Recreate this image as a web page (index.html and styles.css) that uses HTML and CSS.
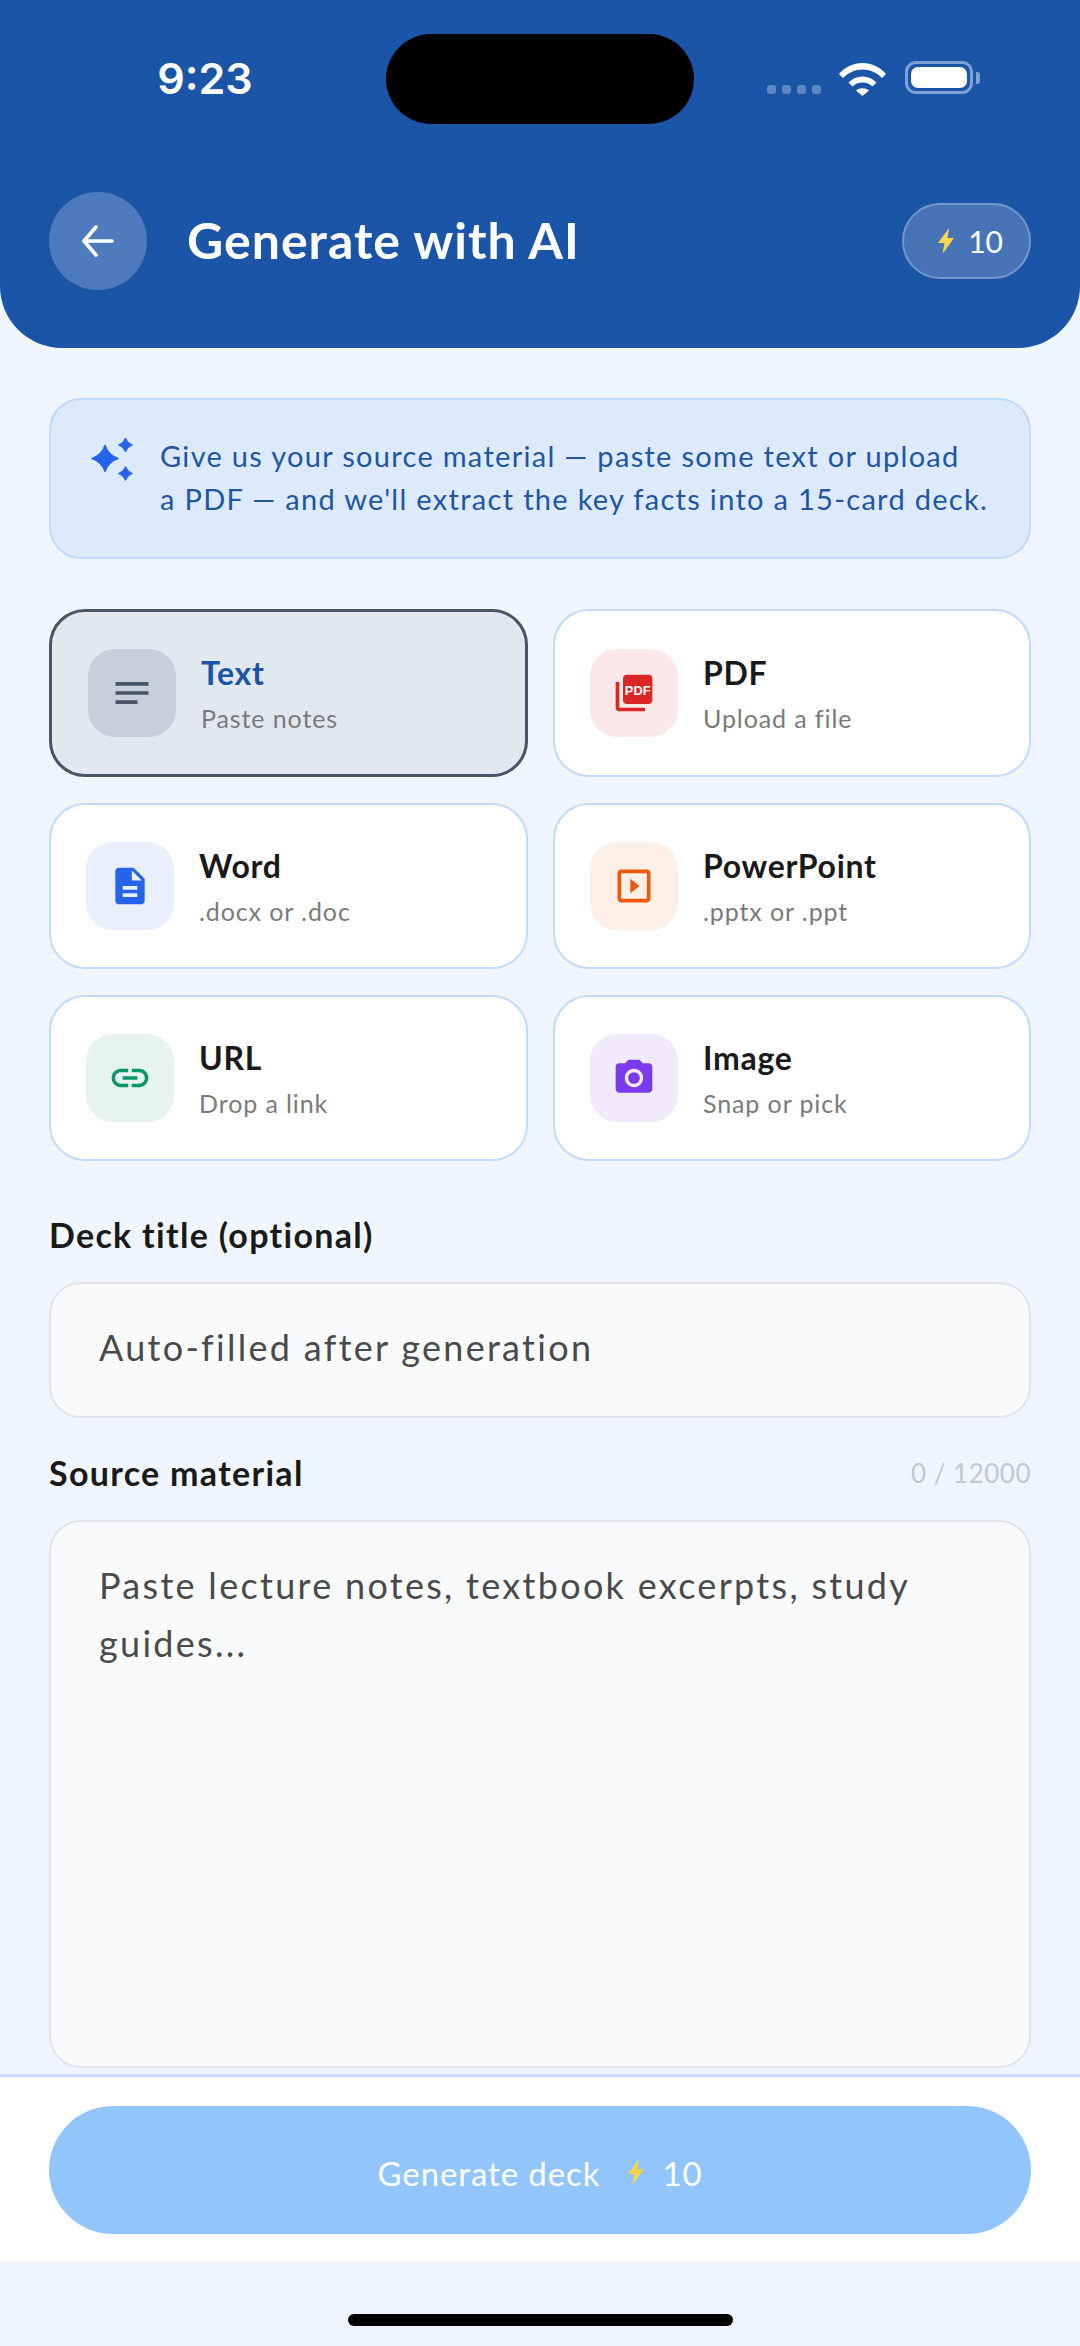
FILE: index.html
```html
<!DOCTYPE html>
<html lang="en">
  <head>
    <meta charset="UTF-8" />
    <meta name="viewport" content="width=device-width, initial-scale=1.0" />
    <title>Generate with AI</title>
    <link rel="stylesheet" href="styles.css">
  </head>
  <body>
    <div class="app">
      <header class="header">
        <div class="status-bar">
          <span class="status-time">9:23</span>
          <span class="island"></span>
          <div class="status-icons">
            <span class="signal"><i></i><i></i><i></i><i></i></span>
            <svg class="wifi" viewBox="0 0 47 36"><path d="M0 14C6 7 14 3 23.500 3S41 7 47 14l-4 4C37.500 12.500 31 9.500 23.500 9.500S9.500 12.500 4 18z" fill="#fff"/><path d="M9.500 22.500c3.800-3.800 8.500-6 14-6s10.200 2.200 14 6l-4 4c-2.800-2.700-6-4-10-4s-7.200 1.300-10 4z" fill="#fff"/><path d="M17 30.500c1.700-1.400 4-2.300 6.500-2.300s4.800.9 6.500 2.300L23.500 36z" fill="#fff"/></svg>
            <span class="battery"><span class="battery-fill"></span></span>
            <span class="battery-nub"></span>
          </div>
        </div>
        <div class="nav">
          <button class="back-btn" type="button">
            <svg width="36" height="36" viewBox="0 0 36 36" fill="none" stroke="#fff" stroke-width="3.600" stroke-linecap="round" stroke-linejoin="round"><path d="M32 18H4M16 4 4 18l12 14"/></svg>
          </button>
          <h1 class="title">Generate with AI</h1>
          <div class="credit-pill">
            <svg class="bolt" viewBox="0 0 16 26"><path d="M11 0 0 15h6.500L4.500 26 16 10H9.500z"/></svg>
            <span>10</span>
          </div>
        </div>
      </header>

      <main class="content">
        <div class="notice">
          <svg class="sparkle" viewBox="0 0 44 44"><path d="M14 7Q17.500 17 27.500 20.500 17.500 24 14 34 10.500 24 .5 20.500 10.500 17 14 7z"/><path d="M34.500 0Q36.300 5.200 41.500 7 36.300 8.800 34.500 14 32.700 8.800 27.500 7 32.700 5.200 34.500 0z"/><path d="M34.500 28.500Q36.300 33.700 41.500 35.500 36.300 37.300 34.500 42.500 32.700 37.300 27.500 35.500 32.700 33.700 34.500 28.500z"/></svg>
          <p>Give us your source material — paste some text or upload<br>a PDF — and we'll extract the key facts into a 15-card deck.</p>
        </div>

        <div class="sources">
          <div class="source source-active">
            <span class="source-icon icon-text">
              <svg viewBox="0 0 24 24"><path d="M3 18h12v-2H3v2zM3 6v2h18V6H3zm0 7h18v-2H3v2z"/></svg>
            </span>
            <div><div class="source-name">Text</div><div class="source-sub">Paste notes</div></div>
          </div>
          <div class="source">
            <span class="source-icon icon-pdf">
              <svg viewBox="0 0 24 24"><path d="M20 2H8c-1.100 0-2 .9-2 2v12c0 1.100.9 2 2 2h12c1.100 0 2-.9 2-2V4c0-1.100-.9-2-2-2z"/><path d="M4 6H2v14c0 1.100.9 2 2 2h14v-2H4V6z"/><text x="14" y="13" class="pdf-label">PDF</text></svg>
            </span>
            <div><div class="source-name">PDF</div><div class="source-sub">Upload a file</div></div>
          </div>
          <div class="source">
            <span class="source-icon icon-word">
              <svg viewBox="0 0 24 24"><path d="M14 2H6c-1.100 0-2 .9-2 2v16c0 1.100.9 2 2 2h12c1.100 0 2-.9 2-2V8l-6-6zm2 16H8v-2h8v2zm0-4H8v-2h8v2zm-3-5V3.500L18.500 9H13z"/></svg>
            </span>
            <div><div class="source-name">Word</div><div class="source-sub">.docx or .doc</div></div>
          </div>
          <div class="source">
            <span class="source-icon icon-ppt">
              <svg viewBox="0 0 24 24"><path d="M10 8v8l5-4-5-4zm9-5H5c-1.100 0-2 .9-2 2v14c0 1.100.9 2 2 2h14c1.100 0 2-.9 2-2V5c0-1.100-.9-2-2-2zm0 16H5V5h14v14z"/></svg>
            </span>
            <div><div class="source-name">PowerPoint</div><div class="source-sub">.pptx or .ppt</div></div>
          </div>
          <div class="source">
            <span class="source-icon icon-url">
              <svg viewBox="0 0 24 24"><path d="M3.900 12c0-1.710 1.390-3.100 3.100-3.100h4V7H7c-2.760 0-5 2.240-5 5s2.240 5 5 5h4v-1.900H7c-1.710 0-3.100-1.390-3.100-3.100zM8 13h8v-2H8v2zm9-6h-4v1.900h4c1.710 0 3.100 1.390 3.100 3.100s-1.390 3.100-3.100 3.100h-4V17h4c2.760 0 5-2.240 5-5s-2.240-5-5-5z"/></svg>
            </span>
            <div><div class="source-name">URL</div><div class="source-sub">Drop a link</div></div>
          </div>
          <div class="source">
            <span class="source-icon icon-image">
              <svg viewBox="0 0 24 24"><path d="M9 2 7.170 4H4c-1.100 0-2 .9-2 2v12c0 1.100.9 2 2 2h16c1.100 0 2-.9 2-2V6c0-1.100-.9-2-2-2h-3.170L15 2H9zm3 15c-2.760 0-5-2.240-5-5s2.240-5 5-5 5 2.240 5 5-2.240 5-5 5z"/><circle cx="12" cy="12" r="3.200"/></svg>
            </span>
            <div><div class="source-name">Image</div><div class="source-sub">Snap or pick</div></div>
          </div>
        </div>

        <div class="field-label title-label">Deck title (optional)</div>
        <div class="field field-input">Auto-filled after generation</div>

        <div class="label-row">
          <span class="field-label">Source material</span>
          <span class="counter">0 / 12000</span>
        </div>
        <div class="field field-area">Paste lecture notes, textbook excerpts, study guides...</div>
      </main>

      <footer class="footer">
        <button class="generate-btn" type="button">
          <span>Generate deck</span>
          <svg class="bolt bolt-large" viewBox="0 0 16 26"><path d="M11 0 0 15h6.500L4.500 26 16 10H9.500z"/></svg>
          <span>10</span>
        </button>
      </footer>
      <div class="home-area"><span class="home-bar"></span></div>
    </div>
  </body>
</html>
```

FILE: styles.css
```css
* {
  box-sizing: border-box;
}

body {
  margin: 0;
  background-color: #eff6ff;
  font-family: Lato, "Noto Sans", sans-serif;
}

.app {
  width: 1080px;
  height: 2346px;
  display: flex;
  flex-direction: column;
  overflow: hidden;
}

/* header */
.header {
  height: 348px;
  background-color: #1b55a7;
  border-radius: 0 0 62px 62px;
  padding-top: 34px;
}

.status-bar {
  display: grid;
  grid-template-columns: 386px 308px 1fr;
  height: 90px;
}

.status-time {
  color: #fff;
  font-family: Inter, sans-serif;
  font-size: 43px;
  font-weight: 600;
  text-align: center;
  padding: 18px 0 0 24px;
  line-height: 52px;
}

.island {
  background-color: #000;
  border-radius: 45px;
}

.status-icons {
  display: flex;
  align-items: flex-start;
  padding: 26px 0 0 73px;
}

.signal {
  display: flex;
  gap: 6px;
  margin: 25px 18px 0 0;
}

.signal i {
  width: 9px;
  height: 9px;
  border-radius: 3px;
  background-color: #5f87c4;
}

.wifi {
  width: 47px;
  height: 36px;
  margin-right: 19px;
}

.battery {
  width: 68px;
  height: 33px;
  margin-top: 1px;
  border: 3px solid #7fa0d3;
  border-radius: 11px;
  padding: 3px;
}

.battery-fill {
  display: block;
  height: 100%;
  background-color: #fff;
  border-radius: 7px;
}

.battery-nub {
  width: 4px;
  height: 12px;
  margin: 12px 0 0 3px;
  background-color: #7fa0d3;
  border-radius: 0 3px 3px 0;
}

.nav {
  display: flex;
  align-items: center;
  margin-top: 68px;
  padding: 0 49px;
}

.back-btn {
  width: 98px;
  height: 98px;
  border: none;
  border-radius: 50%;
  background-color: #4e7bbd;
  display: flex;
  align-items: center;
  justify-content: center;
  padding: 0;
}

.title {
  flex: 1;
  margin: -2px 0 0 40px;
  color: #fff;
  font-size: 50px;
  font-weight: 700;
  line-height: 60px;
  letter-spacing: 1px;
}

.credit-pill {
  display: flex;
  align-items: center;
  gap: 14px;
  height: 76px;
  padding: 0 26px 0 34px;
  border: 2px solid #7497cb;
  border-radius: 38px;
  background-color: #4674b7;
  color: #fff;
  font-size: 30px;
  font-weight: 400;
}

.bolt {
  width: 16px;
  height: 26px;
  fill: #fcd34d;
}

.bolt-large {
  height: 28px;
  margin: -2px 18px 0 28px;
}

/* content */
.content {
  flex: 1;
  padding: 50px 49px 0;
  min-height: 0;
}

.notice {
  display: flex;
  gap: 25px;
  height: 161px;
  padding: 38px 0 0 40px;
  border: 2px solid #bfdbfe;
  border-radius: 32px;
  background-color: #dde9fc;
}

.sparkle {
  width: 44px;
  height: 44px;
  fill: #2563eb;
  stroke: #2563eb;
  stroke-linejoin: round;
  stroke-width: 1;
  flex-shrink: 0;
}

.notice p {
  margin: -4px 0 0;
  color: #1e55a5;
  font-size: 29px;
  line-height: 43px;
  letter-spacing: 1.3px;
  white-space: nowrap;
}

.sources {
  display: grid;
  grid-template-columns: 479px 478px;
  gap: 26px 25px;
  margin-top: 50px;
}

.source {
  display: flex;
  align-items: center;
  gap: 25px;
  padding: 37px 35px;
  border: 2px solid #bfdbfe;
  border-radius: 36px;
  background-color: #fff;
}

.source-active {
  padding-left: 36px;
  border: 3px solid #475569;
  background-color: #e2e8f0;
}

.source-icon {
  width: 88px;
  height: 88px;
  border-radius: 27px;
  display: flex;
  align-items: center;
  justify-content: center;
  flex-shrink: 0;
}

.source-icon svg {
  width: 44px;
  height: 44px;
}

.icon-text { background-color: #c7cfdb; fill: #475569; }
.icon-pdf { background-color: #fce8e8; fill: #dc2626; }
.icon-word { background-color: #e9effd; fill: #2563eb; }
.icon-ppt { background-color: #feefe7; fill: #ea580c; }
.icon-url { background-color: #e6f4ef; fill: #059669; }
.icon-image { background-color: #f1eafd; fill: #7c3aed; }

.pdf-label {
  fill: #fff;
  font-family: "Liberation Sans", sans-serif;
  font-size: 7px;
  font-weight: 700;
  text-anchor: middle;
}

.source-name {
  color: #1a1a1a;
  font-size: 32px;
  font-weight: 700;
  line-height: 40px;
  letter-spacing: 0.7px;
}

.source-active .source-name {
  color: #1b55a7;
}

.source-sub {
  margin-top: 10px;
  color: #7a7a7a;
  font-size: 25px;
  line-height: 30px;
  letter-spacing: 0.9px;
}

.field-label {
  color: #1a1a1a;
  font-size: 34px;
  font-weight: 700;
  line-height: 40px;
  letter-spacing: 1.3px;
}

.title-label {
  margin-top: 54px;
}

.field {
  border: 2px solid #e2e4e8;
  border-radius: 32px;
  background-color: #f9fafb;
  color: #4a4a4a;
  font-size: 36px;
  letter-spacing: 2.3px;
}

.field-input {
  height: 136px;
  margin-top: 27px;
  padding: 0 48px;
  line-height: 127px;
}

.label-row {
  display: flex;
  justify-content: space-between;
  align-items: center;
  margin-top: 35px;
}

.counter {
  color: #c4c8cf;
  font-size: 26px;
  letter-spacing: 0.5px;
}

.field-area {
  height: 548px;
  margin-top: 27px;
  padding: 34px 48px;
  line-height: 58px;
}

/* footer */
.footer {
  height: 188px;
  padding: 29px 49px 0;
  border-top: 3px solid #c7defe;
  background-color: #fff;
}

.generate-btn {
  width: 100%;
  height: 128px;
  display: flex;
  align-items: center;
  justify-content: center;
  padding-top: 6px;
  border: none;
  border-radius: 64px;
  background-color: #93c5fd;
  color: #fff;
  font-family: inherit;
  font-size: 33px;
  font-weight: 400;
  letter-spacing: 0.9px;
}

.home-area {
  height: 84px;
  display: flex;
  justify-content: center;
  padding-top: 52px;
}

.home-bar {
  width: 385px;
  height: 12px;
  border-radius: 6px;
  background-color: #000;
}
```
